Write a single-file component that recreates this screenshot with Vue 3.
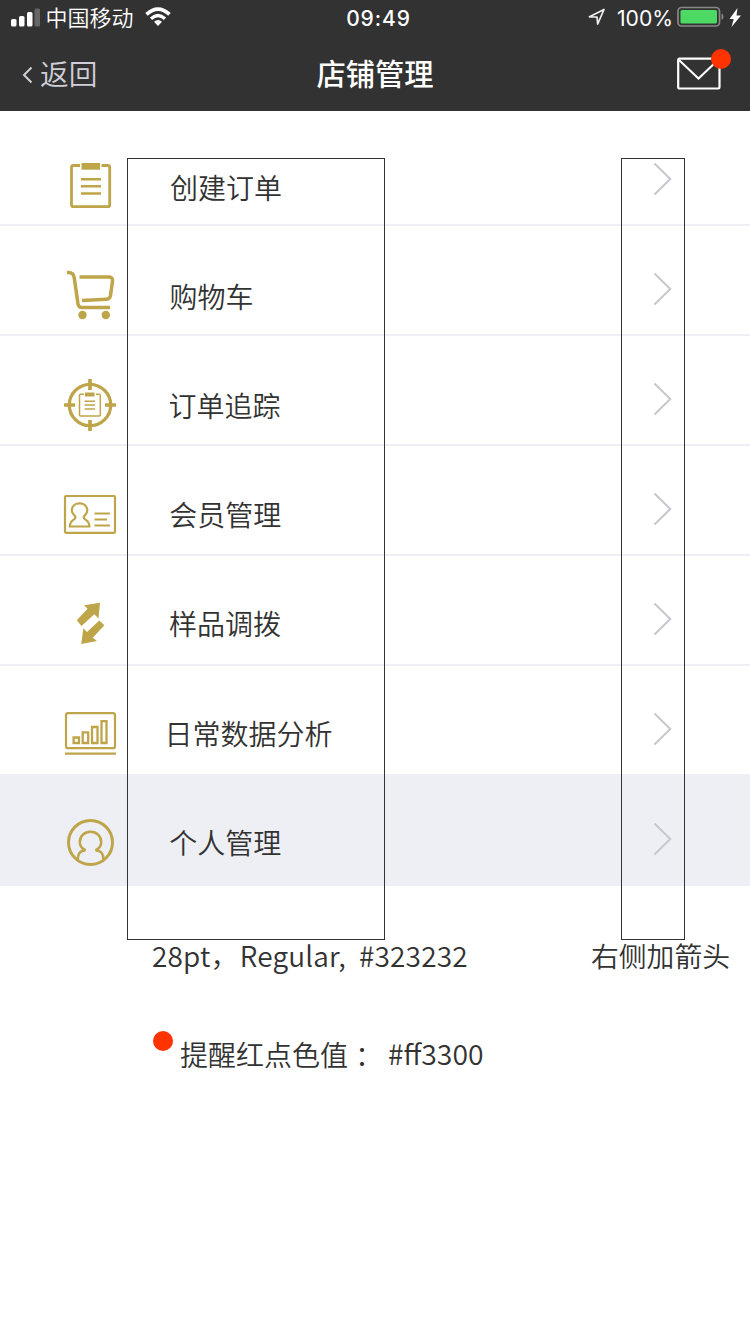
<script setup>
const items = [
  { icon: 'order', label: '创建订单', x: 43, y: 51 },
  { icon: 'cart', label: '购物车', x: 42.5, y: 50 },
  { icon: 'track', label: '订单追踪', x: 41.5, y: 49 },
  { icon: 'member', label: '会员管理', x: 42.3, y: 48 },
  { icon: 'transfer', label: '样品调拨', x: 42, y: 47 },
  { icon: 'chart', label: '日常数据分析', x: 37.5, y: 47 },
  { icon: 'profile', label: '个人管理', x: 42.3, y: 46, active: true },
]
</script>

<template>
  <div class="page">
    <header class="header">
      <div class="status">
        <div class="status-left">
          <svg class="signal" width="30" height="20" viewBox="0 0 30 20">
            <rect x="0" y="11" width="5.500" height="7.500" rx="1.600" fill="#fff" />
            <rect x="8" y="8" width="5.500" height="10.500" rx="1.600" fill="#fff" />
            <rect x="16" y="4" width="5.500" height="14.500" rx="1.600" fill="#fff" />
            <rect x="23.500" y="0.500" width="5.500" height="18" rx="1.600" fill="#666" />
          </svg>
          <span class="carrier">中国移动</span>
          <svg class="wifi" width="26" height="20" viewBox="0 0 26 20">
            <path d="M1.500 7.400Q13-3.200 24.500 7.400" fill="none" stroke="#fff" stroke-width="3.600" />
            <path d="M6 11.700Q13 5.300 20 11.700" fill="none" stroke="#fff" stroke-width="3.300" />
            <path d="M9 14.800Q13 11.200 17 14.800L13 19Z" fill="#fff" />
          </svg>
        </div>
        <span class="time">09:49</span>
        <div class="status-right">
          <svg class="locate" width="18" height="18" viewBox="0 0 18 18">
            <path d="M1.500 8.800L16 1.500L9.700 16L9 9Z" fill="none" stroke="#eee" stroke-width="1.700" stroke-linejoin="round" />
          </svg>
          <span class="percent">100%</span>
          <svg class="battery" width="64" height="22" viewBox="0 0 64 22">
            <rect x="1" y="1.500" width="41.500" height="18.500" rx="3.500" fill="none" stroke="#8b8789" stroke-width="1.700" />
            <rect x="3.500" y="4" width="36.500" height="13.500" rx="1.500" fill="#4cd964" />
            <path d="M44.500 7.500q2 1 2 3.200t-2 3.200z" fill="#8b8789" />
            <path d="M60.500 2L52.500 13h4.200l-2.200 8L64 9.500h-4.500z" fill="#fff" />
          </svg>
        </div>
      </div>
      <nav class="nav">
        <div class="back">
          <svg width="11" height="18" viewBox="0 0 11 18">
            <path d="M9.500 1.500L2 9L9.500 16.500" fill="none" stroke="#d0ced8" stroke-width="2" />
          </svg>
          <span>返回</span>
        </div>
        <h1 class="title">店铺管理</h1>
        <div class="mail">
          <svg width="44" height="33" viewBox="0 0 44 33">
            <rect x="1.200" y="1.700" width="41.300" height="29.800" rx="1.200" fill="none" stroke="#fff" stroke-width="2.200" />
            <path d="M2 3L21.500 21.500L41 3" fill="none" stroke="#fff" stroke-width="2" />
          </svg>
          <i class="dot badge"></i>
        </div>
      </nav>
    </header>

    <main class="list">
      <div v-for="(item, i) in items" :key="item.icon" class="row" :class="{ active: item.active }">
        <svg class="icon" width="127" height="108" :viewBox="`0 ${116 + i * 110} 127 108`">
          <g v-if="item.icon === 'order'">
            <path d="M80 165.500H73.500q-2 0-2 2V204.700q0 2 2 2H107.700q2 0 2-2V167.500q0-2-2-2H101.500" stroke-width="2.800" />
            <path class="solid" d="M81.500 163H100v6.700H81.500z" />
            <path d="M81 179.200h20M81 186.300h20M81 193.500h20" stroke-width="2.600" />
          </g>
          <g v-else-if="item.icon === 'cart'" stroke-width="3.500">
            <path d="M67 272.600h1.500q5 0 5.700 5L78 304q.6 3.500 4 3.500H110" />
            <path d="M79.500 277H109q4 .2 3.500 4L110.500 295.500q-.6 3.500-4 3.700L82 300.500" />
            <circle class="solid" cx="82.500" cy="315" r="4.200" />
            <circle class="solid" cx="105.800" cy="315" r="4.200" />
          </g>
          <g v-else-if="item.icon === 'track'">
            <circle cx="90" cy="405" r="20.700" stroke-width="3.300" />
            <path d="M64 405h11M105 405h11M90 379v11M90 420v11" stroke-width="3.700" />
            <path d="M84 394.300H80.500q-1 0-1 1V415q0 1 1 1H99.300q1 0 1-1V395.300q0-1-1-1H96" stroke-width="1.500" />
            <path class="solid" d="M85 392.500h9.500v4H85z" />
            <path d="M84.500 401.300H95M84.500 405H95M84.500 409H95" stroke-width="1.400" />
          </g>
          <g v-else-if="item.icon === 'member'" stroke-width="2.200">
            <rect x="65" y="496" width="50" height="36.800" rx="1" />
            <path d="M75.500 517.500C75.500 514.500 71.800 515 71.800 510.500C71.800 506 75 503.300 79.500 503.300S87.300 506 87.300 510.500C87.300 515 83.700 514.500 83.700 517.500C83.700 520 89.400 519.500 89.400 526.500H69.800C69.800 519.500 75.500 520 75.500 517.500Z" />
            <path d="M94.500 513.500H110M94.500 519.500H107M94.500 525.500H110" />
          </g>
          <g v-else-if="item.icon === 'transfer'" class="solid">
            <path d="M100 602.700L84 605.300L87.600 608.800L76.800 620.300L81.500 626L94.300 614.300L98.500 618.500Z" />
            <path d="M81.300 644L83.300 628.300L87 632L99.300 620.500L104.400 625.200L92.800 637.700L97 641Z" />
          </g>
          <g v-else-if="item.icon === 'chart'" stroke-width="2.200">
            <rect x="66" y="713.200" width="49" height="35" rx="2" />
            <path d="M65 753.600H116" />
            <path d="M73.600 737.500h5.400v5.500h-5.400zM82.700 732.300h5.500V743h-5.500zM92 727h5.500v16H92zM101.500 721.200h5V743h-5z" stroke-width="2.300" />
          </g>
          <g v-else stroke-width="3">
            <circle cx="90.500" cy="842.400" r="22" />
            <path d="M77.700 860C77.500 854 79.500 850.500 85.500 850.200C82 848.500 79.800 846 79.800 842.200C79.800 836 84.500 831.700 90.500 831.700S101.200 836 101.200 842.200C101.200 846 99 848.500 95.500 850.200C101.500 850.500 103.700 854 103.300 860" stroke-width="2.500" />
          </g>
        </svg>
        <span class="label" :style="{ paddingLeft: `${item.x}px`, paddingTop: `${item.y}px` }">{{ item.label }}</span>
        <svg class="arrow" width="20" height="34" viewBox="0 0 20 34">
          <path d="M1.500 1.500L17.300 17L1.500 32.500" fill="none" stroke="#c7c7cf" stroke-width="2" />
        </svg>
      </div>
      <div class="frame frame-label"></div>
      <div class="frame frame-arrow"></div>
    </main>

    <section class="notes">
      <div class="note-line">
        <span class="spec">28pt，<span class="weight">Regular,</span><span class="hex">#323232</span></span>
        <span class="side-note">右侧加箭头</span>
      </div>
      <div class="reminder">
        <i class="dot"></i>
        <span class="reminder-text">提醒红点色值<span class="colon">：</span></span>
        <span class="reminder-hex">#ff3300</span>
      </div>
    </section>
  </div>
</template>

<style>
body {
  margin: 0;
  background: #fff;
}
</style>

<style scoped>
.page {
  width: 750px;
  height: 1334px;
  overflow: hidden;
  background: #fff;
  color: #323232;
  font: 350 28px/40px "Noto Sans CJK SC", sans-serif;
}
svg {
  display: block;
  flex: none;
}
.header {
  height: 111px;
  background: #323232;
  color: #fff;
}
.status,
.nav {
  display: grid;
  grid-template-columns: 1fr auto 1fr;
}
.status {
  height: 36px;
  font-size: 22px;
  line-height: 36px;
}
.status-left,
.status-right {
  display: flex;
}
.status-left {
  padding-left: 11px;
}
.signal {
  margin-top: 8px;
}
.carrier {
  width: 88px;
  margin-left: 4.500px;
  line-height: 32px;
}
.wifi {
  margin: 7px 0 0 11px;
}
.time {
  padding-left: 7px;
  font: 500 21px/37px Inter, sans-serif;
  letter-spacing: 0.9px;
}
.status-right {
  justify-content: flex-end;
  padding-right: 9px;
}
.locate {
  margin: 8px 11px 0 0;
}
.percent {
  width: 55px;
  margin-right: 5px;
  font: 21.200px/37px Inter, sans-serif;
}
.battery {
  margin-top: 6px;
}
.nav {
  height: 75px;
}
.back {
  display: flex;
  align-items: flex-start;
  padding: 17px 0 0 22px;
  color: #d0ced8;
  font-size: 28.700px;
}
.back svg {
  margin: 13px 7px 0 0;
}
.title {
  margin: 16px 0 0;
  font-size: 29.300px;
  font-weight: 500;
  line-height: 40px;
}
.mail {
  position: relative;
  justify-self: end;
  margin: 21px 29px 0 0;
}
.dot {
  display: block;
  flex: none;
  width: 20px;
  height: 20px;
  border-radius: 50%;
  background: #ff3300;
}
.badge {
  position: absolute;
  top: -8px;
  right: -10px;
}
.list {
  position: relative;
  padding-top: 5px;
}
.row {
  display: flex;
  box-sizing: border-box;
  height: 110px;
  border-bottom: 2px solid #eeeff4;
}
.row.active {
  background: #eeeff4;
}
.label {
  flex: 1;
  white-space: nowrap;
}
.arrow {
  margin: 46px 77px 0 0;
}
.frame {
  position: absolute;
  top: 47px;
  box-sizing: border-box;
  height: 782px;
  border: 1px solid #323232;
}
.frame-label {
  left: 127px;
  width: 258px;
}
.frame-arrow {
  left: 621px;
  width: 64px;
}
.notes {
  padding-top: 49px;
}
.note-line {
  display: flex;
  justify-content: space-between;
  padding: 0 20px 0 152px;
}
.spec {
  letter-spacing: 0.180px;
}
.spec .weight {
  margin: 0 13px 0 1px;
}
.side-note {
  font-size: 27.800px;
}
.reminder {
  display: flex;
  padding: 56px 0 0 153px;
}
.reminder-text {
  width: 208px;
  margin-left: 7px;
  padding-top: 3px;
  white-space: nowrap;
}
.reminder-hex {
  padding-top: 2px;
  font-size: 28.300px;
}
.colon {
  margin-left: 7px;
}
.icon {
  fill: none;
  stroke: #bea54a;
}
.icon .solid {
  fill: #bea54a;
  stroke: none;
}
</style>
